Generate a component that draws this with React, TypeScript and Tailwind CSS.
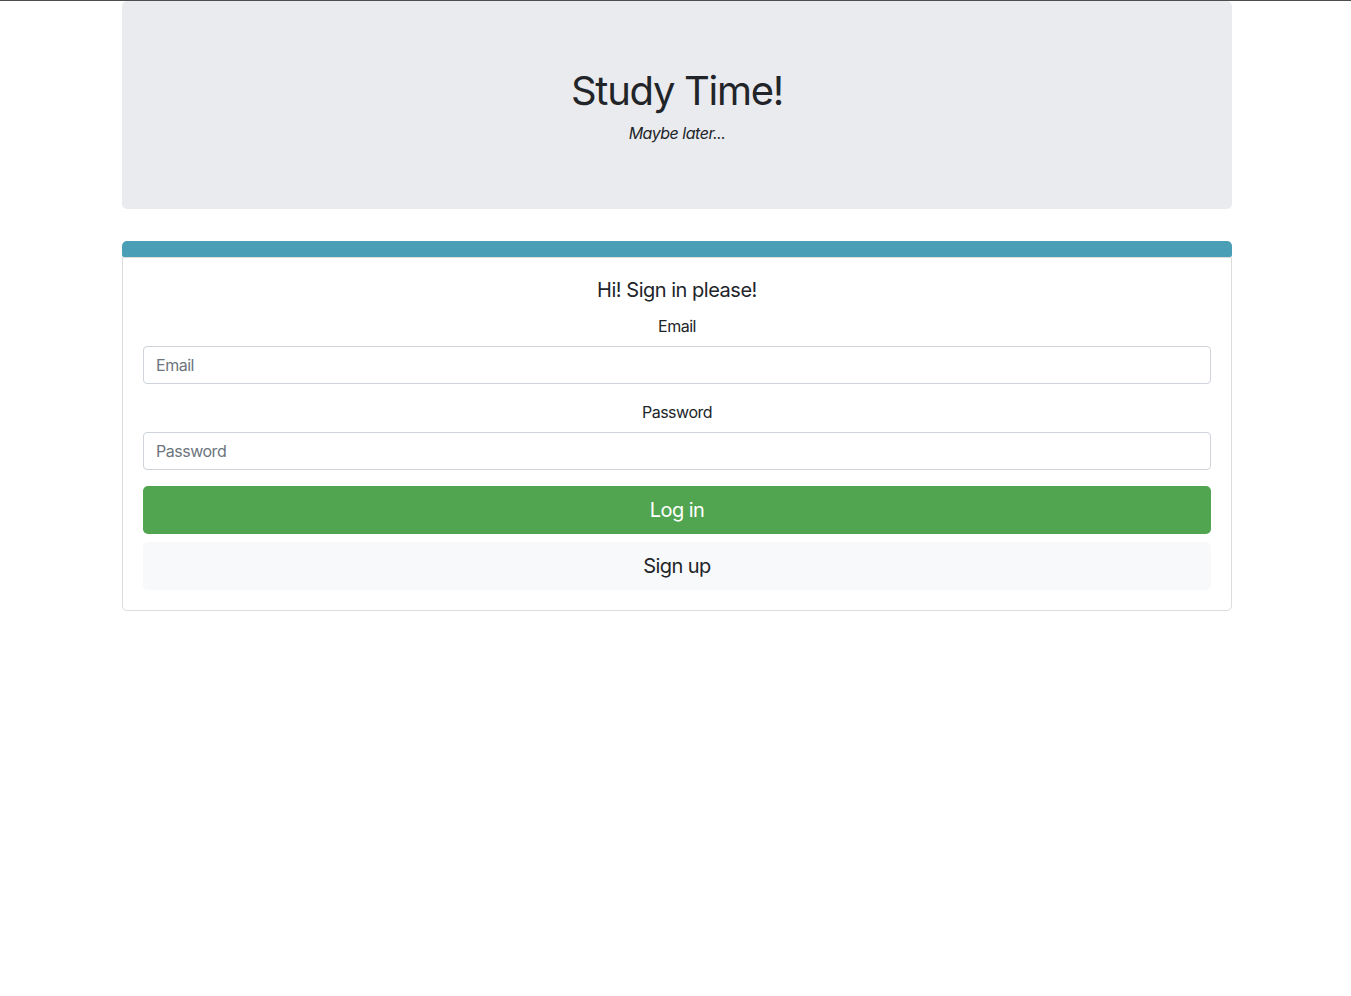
import React from "react";

export default function App() {
  return (
    <div className="min-h-screen border-t border-[#4d4d4d] bg-white pl-[3px] font-['Inter','Noto_Sans',sans-serif] tracking-[-0.03em] text-[#212529]">
      <div className="mx-auto w-[1110px]">
        {/* Jumbotron */}
        <div className="rounded-[5px] bg-[#eaebef] px-8 pt-[66px] pb-16 text-center">
          <h1 className="mb-[6px] text-[40px] leading-[48px] font-normal tracking-[-0.032em]">Study Time!</h1>
          <p className="text-base leading-6 italic">Maybe later...</p>
        </div>

        {/* Sign in card */}
        <div className="mt-8">
          <div className="h-4 rounded-t-[5px] rounded-b-[2px] bg-[#4a9eb6]" />
          <div className="rounded-b-[5px] border border-[#dcdcdc] px-5 pt-5 pb-5 text-center">
            <h2 className="text-xl leading-6 font-normal">Hi! Sign in please!</h2>
            <form className="mt-3 flex flex-col" onSubmit={(e) => e.preventDefault()}>
              <label className="mb-2 text-base leading-6">Email</label>
              <input
                type="email"
                placeholder="Email"
                className="h-[38px] w-full rounded-[4px] border border-[#ced4da] px-3 text-base tracking-[-0.03em] text-[#495057] outline-none placeholder:text-[#6c757d]"
              />
              <label className="mt-4 mb-2 text-base leading-6">Password</label>
              <input
                type="password"
                placeholder="Password"
                className="h-[38px] w-full rounded-[4px] border border-[#ced4da] px-3 text-base tracking-[-0.03em] text-[#495057] outline-none placeholder:text-[#6c757d]"
              />
              <button
                type="submit"
                className="mt-4 h-12 w-full rounded-[5px] bg-[#52a550] text-xl tracking-[-0.03em] text-white"
              >
                Log in
              </button>
              <button
                type="button"
                className="mt-2 h-12 w-full rounded-[5px] bg-[#f8f9fa] text-xl tracking-[-0.03em] text-[#212529]"
              >
                Sign up
              </button>
            </form>
          </div>
        </div>
      </div>
    </div>
  );
}
